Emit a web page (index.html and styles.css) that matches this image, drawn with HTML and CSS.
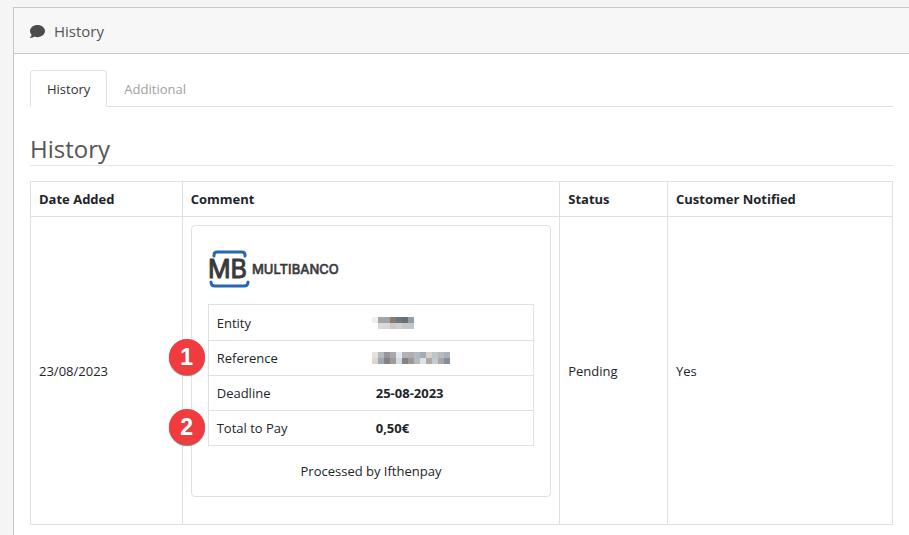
FILE: index.html
```html
<!DOCTYPE html>
<html lang="en">
<head>
<meta charset="utf-8">
<title>Order History</title>
<link rel="stylesheet" href="styles.css">
</head>
<body>
<main class="panel">
  <header class="panel-header">
    <svg class="comment-icon" viewBox="0 0 512 512" aria-hidden="true"><path d="M256 32C115 32 0 125 0 240c0 50 21 95 57 131-13 51-54 95-55 96-2 2-3 6-1 9 1 3 4 4 7 4 66 0 116-32 140-51 33 12 69 19 108 19 141 0 256-93 256-208S397 32 256 32z"/></svg>
    <h1 class="panel-title">History</h1>
  </header>
  <div class="panel-body">
    <nav class="tabs">
      <a class="tab active" href="#history">History</a>
      <a class="tab" href="#additional">Additional</a>
    </nav>
    <section id="history">
      <h2 class="section-title">History</h2>
      <table class="grid history-table">
        <colgroup><col class="col-date"><col class="col-comment"><col class="col-status"><col class="col-notified"></colgroup>
        <thead>
          <tr><th>Date Added</th><th>Comment</th><th>Status</th><th>Customer Notified</th></tr>
        </thead>
        <tbody>
          <tr>
            <td>23/08/2023</td>
            <td>
              <div class="card">
                <svg class="logo" viewBox="0 0 136 54" role="img" aria-label="Multibanco">
                  <g class="logo-frame">
                    <path d="M6 14v-1q0-3 3-3h25q3 0 3 3v1"/>
                    <path d="M3 40q0 4 4 4h29q4 0 4-4"/>
                  </g>
                  <text class="logo-mark" x="0" y="36">MB</text>
                  <text class="logo-name" x="44" y="32">MULTIBANCO</text>
                </svg>
                <table class="grid payment-table">
                  <colgroup><col class="col-label"><col></colgroup>
                  <tbody>
                    <tr class="first-row">
                      <th>Entity</th>
                      <td><svg class="redacted" viewBox="0 0 78 12" aria-hidden="true"><path fill="#f4f0ed" d="M0 0h6v6H0z"/><path fill="#a0a6ac" d="M6 0h6v6H6z"/><path fill="#a2a4a7" d="M12 0h6v6h-6z"/><path fill="#887a70" d="M18 0h6v6h-6z"/><path fill="#6c747d" d="M24 0h6v6h-6z"/><path fill="#6d6d72" d="M30 0h6v6h-6z"/><path fill="#91a0a8" d="M36 0h6v6h-6z"/><path fill="#d9d9da" d="M6 6h12v6H6z"/><path fill="#cbc8c5" d="M18 6h6v6h-6z"/><path fill="#d1cfcd" d="M24 6h6v6h-6z"/><path fill="#c9c6c4" d="M30 6h6v6h-6z"/><path fill="#c1c7cd" d="M36 6h6v6h-6z"/></svg></td>
                    </tr>
                    <tr>
                      <th class="marked">Reference<span class="badge">1</span></th>
                      <td><svg class="redacted" viewBox="0 0 78 12" aria-hidden="true"><path fill="#e7dfd9" d="M0 0h6v6H0z"/><path fill="#b3bac0" d="M6 0h6v6H6z"/><path fill="#98989c" d="M12 0h6v6h-6z"/><path fill="#aaa8a7" d="M18 0h6v6h-6z"/><path fill="#dfeaf2" d="M24 0h6v6h-6z"/><path fill="#b0b2b5" d="M30 0h6v6h-6z"/><path fill="#b2adab" d="M36 0h6v6h-6z"/><path fill="#b1bac2" d="M42 0h6v6h-6z"/><path fill="#a3adb5" d="M48 0h6v6h-6z"/><path fill="#d8d0ca" d="M54 0h6v6h-6z"/><path fill="#c0c5c5" d="M60 0h6v6h-6z"/><path fill="#bababe" d="M66 0h6v6h-6z"/><path fill="#a9b2bc" d="M72 0h6v6h-6z"/><path fill="#ded7d0" d="M0 6h6v6H0z"/><path fill="#a0a8b1" d="M6 6h6v6H6z"/><path fill="#838287" d="M12 6h6v6h-6z"/><path fill="#a09b99" d="M18 6h6v6h-6z"/><path fill="#d5dce1" d="M24 6h6v6h-6z"/><path fill="#838387" d="M30 6h6v6h-6z"/><path fill="#9c9895" d="M36 6h6v6h-6z"/><path fill="#b9b9bc" d="M42 6h6v6h-6z"/><path fill="#d8e4ed" d="M48 6h6v6h-6z"/><path fill="#b0a8a3" d="M54 6h6v6h-6z"/><path fill="#c5cbca" d="M60 6h6v6h-6z"/><path fill="#a5a5aa" d="M66 6h6v6h-6z"/><path fill="#858f9b" d="M72 6h6v6h-6z"/></svg></td>
                    </tr>
                    <tr><th>Deadline</th><td>25-08-2023</td></tr>
                    <tr><th class="marked">Total to Pay<span class="badge">2</span></th><td>0,50€</td></tr>
                  </tbody>
                </table>
                <p class="processed">Processed by Ifthenpay</p>
              </div>
            </td>
            <td>Pending</td>
            <td>Yes</td>
          </tr>
        </tbody>
      </table>
    </section>
  </div>
</main>
</body>
</html>
```
FILE: styles.css
```css
* { box-sizing: border-box; }

body {
  margin: 0;
  padding: 7px 0 0 13px;
  background: #f5f5f5;
  color: #212529;
  font: 13px/18px "Open Sans", "Noto Sans", sans-serif;
}

.panel {
  min-height: calc(100vh - 7px);
  border: 1px solid #c8c8c8;
  border-width: 1px 0 0 1px;
  background: #fff;
}

.panel-header {
  display: flex;
  align-items: center;
  gap: 9px;
  padding: 12px 16px 11px;
  border-bottom: 1px solid #c8c8c8;
  background: #f7f7f7;
}

.comment-icon { width: 15px; height: 15px; fill: #4c4c4c; }

.panel-title {
  margin: 0;
  color: #555;
  font-size: 15px;
  font-weight: 400;
  line-height: 22px;
}

.panel-body { padding: 16px 16px 0; }

.tabs { display: flex; border-bottom: 1px solid #dee2e6; }

.tab {
  margin-bottom: -1px;
  padding: 9px 16px 8px;
  border: 1px solid transparent;
  border-radius: 4px 4px 0 0;
  color: #a0a0a0;
  text-decoration: none;
}

.tab.active {
  border-color: #dee2e6 #dee2e6 #fff;
  background: #fff;
  color: #333;
}

.section-title {
  margin: 26px 0 15px;
  border-bottom: 1px solid #e5e5e5;
  color: #555;
  font-size: 24px;
  font-weight: 400;
  line-height: 32px;
}

.grid {
  width: 100%;
  border-collapse: collapse;
  table-layout: fixed;
}

.grid th,
.grid td {
  padding: 8px;
  border: 1px solid #dee2e6;
  text-align: left;
  vertical-align: middle;
}

.col-date { width: 17.6%; }
.col-comment { width: 43.8%; }
.col-status { width: 12.5%; }
.col-label { width: 49%; }

.card {
  margin-bottom: 19px;
  padding: 16px;
  border: 1px solid #dee2e6;
  border-radius: 4px;
}

.logo { display: block; width: 136px; height: 54px; margin-bottom: 8px; }
.logo-frame { fill: none; stroke: #2766b1; stroke-width: 3; stroke-linecap: round; }
.logo text { fill: #3a3a3a; stroke: #3a3a3a; stroke-linejoin: round; }
.logo-mark { font: 400 25px Inter, sans-serif; stroke-width: 1; }
.logo-name { font: 500 13px Inter, sans-serif; stroke-width: 0.5; }

.grid .payment-table { border: 1px solid #dee2e6; }
.grid .payment-table th,
.grid .payment-table td { border-width: 1px 0; }
.grid .payment-table th { font-weight: 400; }
.grid .payment-table td { font-weight: 700; }
.first-row { height: 36px; }

.redacted { display: block; width: 78px; height: 12px; margin-left: -4px; }

.grid .marked { position: relative; }

.badge {
  position: absolute;
  top: calc(50% - 19px);
  left: -40px;
  width: 36px;
  height: 36px;
  border-radius: 50%;
  background: #f23b3f;
  box-shadow: 0 1px 1px #777;
  color: #fff;
  font: 700 23px/36px "Liberation Sans", sans-serif;
  text-align: center;
  text-shadow: 1px 1px 1px #7778;
}

.processed { margin: 16px 0 0; text-align: center; }
```
